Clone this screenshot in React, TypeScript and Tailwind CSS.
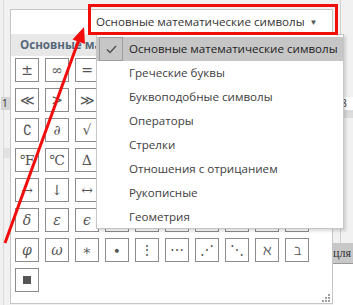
import React from "react";

const symbols = [
  "±", "∞", "=", "≠", "~", "×", "÷", "!", "∝", "<",
  "≪", ">", "≫", "≤", "≥", "∓", "≅", "≈", "≡", "∀",
  "∁", "∂", "√", "∛", "∜", "∪", "∩", "∅", "%", "°",
  "℉", "℃", "∆", "∇", "∃", "∄", "∈", "∋", "←", "↑",
  "→", "↓", "↔", "∴", "+", "−", "¬", "α", "β", "γ",
  "δ", "ε", "ϵ", "θ", "ϑ", "μ", "π", "ρ", "σ", "τ",
  "φ", "ω", "∗", "∙", "⋮", "⋯", "⋰", "⋱", "ℵ", "ℶ",
  "∎",
];

const italic = new Set(["δ", "ε", "ϵ", "θ", "ϑ", "μ", "π", "ρ", "σ", "τ", "φ", "ω", "α", "β", "γ"]);

const items = [
  "Основные математические символы",
  "Греческие буквы",
  "Буквоподобные символы",
  "Операторы",
  "Стрелки",
  "Отношения с отрицанием",
  "Рукописные",
  "Геометрия",
];

export default function App() {
  return (
    <div
      className="relative w-[353px] h-[305px] overflow-hidden bg-[#f1f1f1] flex"
      style={{ fontFamily: '"Open Sans", "Noto Sans", sans-serif' }}
    >
      {/* левая полоса (фон документа) */}
      <div className="w-[10px] shrink-0 flex flex-col border-l border-[#d9d9d9] ml-[3px]">
        <div className="h-[97px]" />
        <div className="h-[13px] bg-[#d4d4d4] text-[10px] leading-[13px] text-[#333] -ml-[3px] pl-[1px]">1</div>
        <div className="h-[38px]" />
        <div className="h-[10px] bg-[#e2e2e2]" />
      </div>

      {/* панель символов */}
      <div className="-ml-[3px] mt-[9px] w-[323px] h-[295px] shrink-0 bg-white border border-[#c6c6c6] flex flex-col">
        <div className="h-[24px] shrink-0 flex items-center pl-[85px] whitespace-nowrap">
          <span className="text-[11.6px] text-[#333]">Основные математические символы</span>
          <span className="ml-[5px] text-[8px] text-[#555]">▼</span>
        </div>
        <div className="h-[22px] shrink-0 bg-[#e8e8e8] flex items-center pl-[9px] overflow-hidden whitespace-nowrap">
          <span className="text-[11.6px] font-bold text-[#56687a]">Основные математические символы</span>
        </div>
        <div className="grid grid-cols-[repeat(10,24px)] gap-[6px] pl-[4px] pt-[2px]">
          {symbols.map((s, i) => (
            <div
              key={i}
              className={`w-[24px] h-[24px] border border-[#8c8c8c] flex items-center justify-center text-[14px] text-[#555] ${
                italic.has(s) ? "italic" : ""
              }`}
              style={{ fontFamily: '"DejaVu Serif", "Liberation Serif", serif' }}
            >
              {s === "∎" ? <span className="w-[8px] h-[8px] bg-[#555]" /> : s}
            </div>
          ))}
        </div>
        <div className="flex-1 flex items-end justify-end pr-[2px] pb-[1px]">
          <svg width="8" height="8" viewBox="0 0 8 8">
            <rect x="6" y="0" width="2" height="2" fill="#a0a0a0" />
            <rect x="3" y="3" width="2" height="2" fill="#a0a0a0" />
            <rect x="6" y="3" width="2" height="2" fill="#a0a0a0" />
            <rect x="0" y="6" width="2" height="2" fill="#a0a0a0" />
            <rect x="3" y="6" width="2" height="2" fill="#a0a0a0" />
            <rect x="6" y="6" width="2" height="2" fill="#a0a0a0" />
          </svg>
        </div>
      </div>

      {/* правая полоса */}
      <div className="flex-1 flex flex-col border-l border-[#d0d0d0] ml-[7px]">
        <div className="h-[97px]" />
        <div className="h-[13px] bg-white text-[10px] leading-[13px] text-[#333] -ml-[5px] pl-[5px]">8</div>
        <div className="h-[8px] bg-[#dcdcdc]" />
        <div className="h-[125px]" />
        <div className="h-[20px] bg-[#c8c8c8] text-[12px] leading-[20px] text-[#333] -ml-[8px]" style={{ fontFamily: '"Liberation Serif", serif' }}>цля</div>
        <div className="h-[1px] bg-[#9a9a9a] -ml-[8px]" />
        <div className="flex-1 bg-white -ml-[8px]" />
      </div>

      {/* выпадающий список */}
      <div className="absolute left-[96px] top-[34px] w-[248px] h-[195px] bg-white border border-[#c6c6c6] shadow-[2px_2px_3px_rgba(0,0,0,0.15)] pt-[2px]">
        {items.map((t, i) => (
          <div
            key={t}
            className={`h-[24px] flex items-center ${i === 0 ? "bg-[#c6c6c6] text-[#222]" : "text-[#404040]"}`}
          >
            <div className="w-[24px] h-[24px] ml-[2px] shrink-0 flex items-center justify-center">
              {i === 0 && (
                <div className="w-[24px] h-[24px] border border-[#9d9d9d] flex items-center justify-center">
                  <svg width="11" height="9" viewBox="0 0 11 9">
                    <path d="M1 4.5 L4 7.5 L10 1" fill="none" stroke="#505050" strokeWidth="1.4" />
                  </svg>
                </div>
              )}
            </div>
            <span className="ml-[6px] text-[11.6px] whitespace-nowrap">{t}</span>
          </div>
        ))}
      </div>

      {/* красная рамка */}
      <div className="absolute left-[88px] top-[4px] w-[250px] h-[31px] border-[3px] border-[#f20d0d]" />

      {/* красная стрелка */}
      <svg className="absolute left-0 top-0" width="353" height="305" viewBox="0 0 353 305">
        <line x1="5" y1="243" x2="79.5" y2="38" stroke="#f20d0d" strokeWidth="3" />
        <polygon points="84,27 85,44 72.5,39.5" fill="#f20d0d" />
      </svg>
    </div>
  );
}
